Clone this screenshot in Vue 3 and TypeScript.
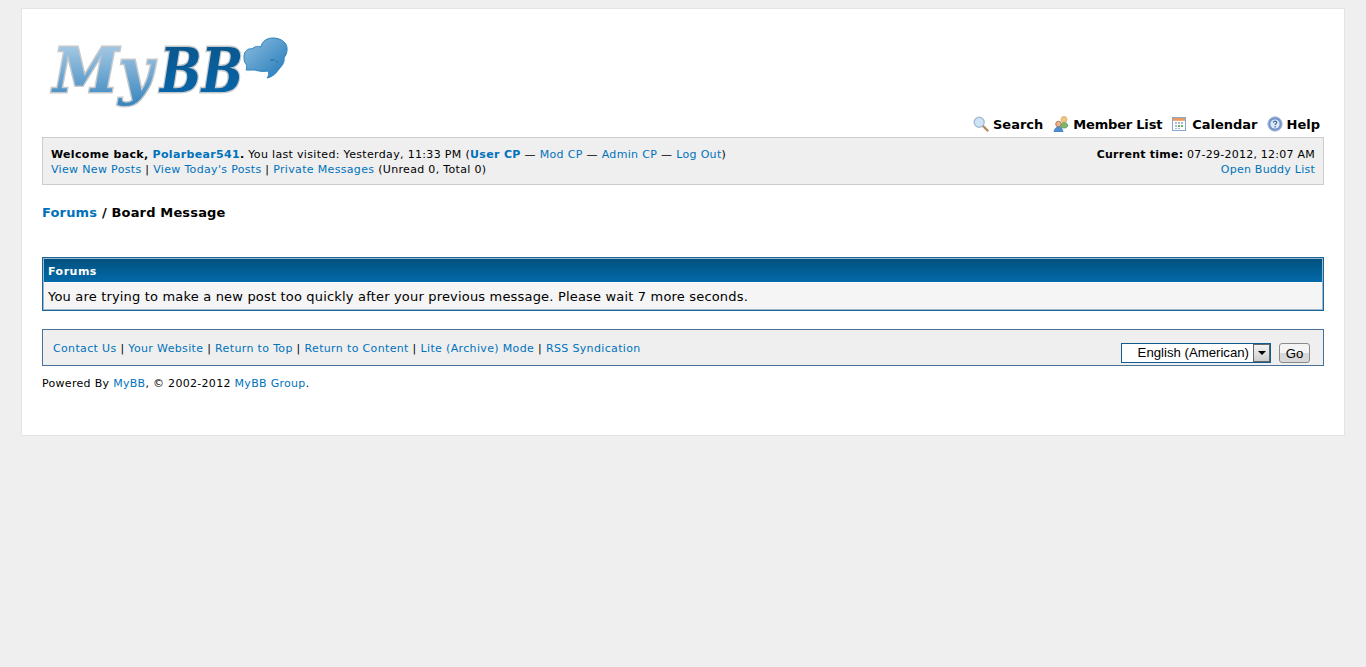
<script setup lang="ts">
const navItems = [
  { label: 'Search', icon: 'search' },
  { label: 'Member List', icon: 'members' },
  { label: 'Calendar', icon: 'calendar' },
  { label: 'Help', icon: 'help' },
]
const footerLinks = ['Contact Us', 'Your Website', 'Return to Top', 'Return to Content', 'Lite (Archive) Mode', 'RSS Syndication']
</script>

<template>
  <div class="page">
    <div class="wrapper">
      <header class="header">
        <svg class="logo" width="240" height="84" viewBox="0 -8 240 84" aria-label="MyBB">
          <defs>
            <linearGradient id="lightText" x1="0" y1="0" x2="0" y2="1">
              <stop offset="0" stop-color="#b9d5ea" />
              <stop offset="1" stop-color="#3584bd" />
            </linearGradient>
            <linearGradient id="darkText" x1="0" y1="0" x2="0" y2="1">
              <stop offset="0" stop-color="#0a5488" />
              <stop offset="1" stop-color="#0769b0" />
            </linearGradient>
            <linearGradient id="bubble" x1="0" y1="0" x2="1" y2="1">
              <stop offset="0" stop-color="#8fbee0" />
              <stop offset="1" stop-color="#1f78b8" />
            </linearGradient>
          </defs>
          <text x="4" y="55" class="logo-text" textLength="100" lengthAdjust="spacingAndGlyphs" fill="url(#lightText)" stroke="#c6c9cc" stroke-width="3" paint-order="stroke">My</text>
          <text x="111" y="55" class="logo-text" textLength="83" lengthAdjust="spacingAndGlyphs" fill="url(#darkText)" stroke="#c6c9cc" stroke-width="3" paint-order="stroke">BB</text>
          <path d="M195 20C195 14 199 11 203 12C206 9 209 9 212 10C213 4 218 1 224 1C232 1 239 6 238 13C238 17 236 19 235 21C236 25 233 29 230 32C228 35 224 40 218 41C220 39 220 36 219 34C214 35 209 34 206 33C203 33 200 33 197 33C198 31 198 29 197 27C195 25 195 22 195 20Z" fill="url(#bubble)" stroke="#2b83c0" stroke-width="1" />
          <path d="M221 23h5M227 25h2" stroke="#1d6ba6" stroke-width="1" />
        </svg>
        <nav class="top-nav">
          <a v-for="item in navItems" :key="item.label" class="top-link" :class="{ tight: item.icon === 'members', last: item.icon === 'help' }">
            <svg v-if="item.icon === 'search'" class="nav-icon" viewBox="0 0 16 16">
              <circle cx="6.2" cy="6.2" r="5" fill="#cfe3f6" stroke="#a6bdd4" stroke-width="1.4" />
              <path d="M10.5 10.5l4 4" stroke="#b08a62" stroke-width="2.4" stroke-linecap="round" />
            </svg>
            <svg v-else-if="item.icon === 'members'" class="nav-icon" viewBox="0 0 16 16">
              <circle cx="11" cy="3.5" r="3" fill="#f3c67e" stroke="#c99a4e" stroke-width=".6" />
              <path d="M7.5 11c0-3 1.5-4.5 3.5-4.5s4 1 4 3.5l-2 2H9z" fill="#7fb56a" stroke="#5e934c" stroke-width=".6" />
              <circle cx="5.5" cy="8" r="2.8" fill="#e9b489" stroke="#8e5f3e" stroke-width=".7" />
              <path d="M1 16c0-3 2-5 4.5-5S10 13 10 16z" fill="#4f8fd3" stroke="#3a6ea8" stroke-width=".6" />
            </svg>
            <svg v-else-if="item.icon === 'calendar'" class="nav-icon cal" viewBox="0 0 14 14">
              <rect x=".5" y=".5" width="13" height="13" fill="#fff" stroke="#86a6cc" />
              <rect x="1" y="1" width="12" height="2.8" fill="#ee9a5a" />
              <path d="M3 5h2v2H3zM6 5h2v2H6zM9 5h2v2H9zM3 8h2v2H3zM3 11h2v1H3zM6 11h2v1H6z" fill="#a9bccf" />
              <path d="M6 8h2v2H6zM9 8h2v2H9z" fill="#6fb36f" />
            </svg>
            <svg v-else class="nav-icon" viewBox="0 0 16 16">
              <circle cx="8" cy="8" r="7.2" fill="#7397cc" stroke="#aebfd6" stroke-width="1" />
              <circle cx="8" cy="8" r="4.6" fill="#dfe8f5" />
              <path d="M6.4 6.6c.1-1 .8-1.5 1.7-1.5s1.6.6 1.6 1.4c0 1.2-1.6 1.2-1.6 2.5" fill="none" stroke="#3f68a8" stroke-width="1.2" />
              <circle cx="8.1" cy="10.7" r=".8" fill="#3f68a8" />
            </svg>
            <span>{{ item.label }}</span>
          </a>
        </nav>
      </header>

      <section class="panel">
        <div>
          <div>
            <strong>Welcome back, <a class="link">Polarbear541</a>.</strong> You last visited: Yesterday, 11:33 PM
            (<a class="link"><strong>User CP</strong></a> — <a class="link">Mod CP</a> — <a class="link">Admin CP</a> — <a class="link">Log Out</a>)
          </div>
          <div>
            <a class="link">View New Posts</a> | <a class="link">View Today's Posts</a> | <a class="link">Private Messages</a> (Unread 0, Total 0)
          </div>
        </div>
        <div class="panel-right">
          <div><strong>Current time:</strong> 07-29-2012, 12:07 AM</div>
          <div><a class="link">Open Buddy List</a></div>
        </div>
      </section>

      <div class="breadcrumb"><a class="link">Forums</a> / Board Message</div>

      <section class="tborder">
        <div class="thead">Forums</div>
        <div class="trow">You are trying to make a new post too quickly after your previous message. Please wait 7 more seconds.</div>
      </section>

      <footer class="bottom">
        <div class="bottom-links">
          <template v-for="(l, i) in footerLinks" :key="l">
            <span v-if="i > 0" class="sep"> | </span><a class="link">{{ l }}</a>
          </template>
        </div>
        <div class="lang">
          <div class="select">
            <span class="select-text">English (American)</span>
            <span class="select-btn"><i class="caret"></i></span>
          </div>
          <button class="go" type="button">Go</button>
        </div>
      </footer>

      <div class="powered">Powered By <a class="link">MyBB</a>, © 2002-2012 <a class="link">MyBB Group</a>.</div>
    </div>
  </div>
</template>

<style>
html, body { margin: 0; background: #efefef; }
</style>

<style scoped>
.page {
  min-height: 667px;
  box-sizing: border-box;
  background: #efefef;
  padding: 8px 21px 0;
  font-family: Verdana, "DejaVu Sans", sans-serif;
  font-size: 11px;
  line-height: 15px;
  letter-spacing: 0.33px;
  color: #000;
}
.wrapper {
  box-sizing: border-box;
  height: 428px;
  background: #fff;
  border: 1px solid #e4e4e4;
  padding: 0 20px;
}
.header {
  height: 128px;
  display: flex;
  flex-direction: column;
  justify-content: space-between;
}
.logo { margin: 20px 0 0 7px; display: block; flex: none; }
.logo-text {
  font-family: "DejaVu Serif", serif;
  font-weight: bold;
  font-style: italic;
  font-size: 62px;
  letter-spacing: 0;
}
.top-nav {
  display: flex;
  justify-content: flex-end;
  gap: 10px;
  padding-right: 4px;
  font-size: 13px;
  font-weight: bold;
  line-height: 16px;
  letter-spacing: 0;
  padding-bottom: 4px;
}
.top-link { display: flex; align-items: center; gap: 4px; }
.tight { letter-spacing: -0.2px; }
.last { margin-left: -1px; }
.nav-icon { width: 16px; height: 16px; display: block; margin-top: -3px; }
.cal { width: 14px; height: 14px; margin-top: -3px; margin-right: 2px; }
.panel {
  box-sizing: border-box;
  height: 48px;
  background: #efefef;
  border: 1px solid #ccc;
  padding: 9px 8px 0;
  display: flex;
  justify-content: space-between;
}
.panel-right { text-align: right; letter-spacing: 0.24px; }
.link { color: #0072bc; }
.breadcrumb {
  margin-top: 20px;
  font-size: 13px;
  font-weight: bold;
  line-height: 16px;
  letter-spacing: 0.16px;
}
.tborder {
  box-sizing: border-box;
  height: 54px;
  margin-top: 36px;
  border: 1px solid #1a6497;
  background: #9bb8cf;
  padding: 1px;
  display: flex;
  flex-direction: column;
}
.thead {
  height: 23px;
  flex: none;
  box-sizing: border-box;
  padding: 5px 4px 0;
  background: linear-gradient(#02517f, #026aa9);
  color: #fff;
  font-weight: bold;
  line-height: 15px;
  letter-spacing: 0.5px;
}
.trow {
  flex: 1;
  background: #f5f5f5;
  border-top: 1px solid #fff;
  font-size: 13px;
  line-height: 16px;
  letter-spacing: 0.18px;
  padding: 6px 4px 0;
}
.bottom {
  box-sizing: border-box;
  height: 37px;
  margin-top: 18px;
  border: 1px solid #4a7196;
  background: #efefef;
  display: flex;
  justify-content: space-between;
  padding: 11px 13px 0 10px;
  letter-spacing: 0.35px;
}
.sep { white-space: pre; }
.lang {
  display: flex;
  align-items: flex-start;
  gap: 8px;
  margin-top: 2px;
  font-family: Arial, "Liberation Sans", sans-serif;
  font-size: 13.2px;
  letter-spacing: 0;
}
.select {
  box-sizing: border-box;
  width: 150px;
  height: 20px;
  border: 1px solid #0f5c8e;
  background: #fff;
  display: flex;
  justify-content: flex-end;
  align-items: center;
}
.select-text { line-height: 18px; padding-right: 4px; }
.select-btn {
  box-sizing: border-box;
  width: 17px;
  height: 18px;
  border: 1px solid #666;
  background: linear-gradient(#f2f2f2, #cfcfcf);
  display: flex;
  align-items: center;
  justify-content: center;
}
.caret {
  display: block;
  width: 0;
  height: 0;
  border-left: 4px solid transparent;
  border-right: 4px solid transparent;
  border-top: 4px solid #000;
}
.go {
  box-sizing: border-box;
  width: 31px;
  height: 20px;
  padding: 0;
  border: 1px solid #8a8a8a;
  border-radius: 3px;
  background: linear-gradient(#f4f4f4 50%, #d8d8d8 50%);
  font: inherit;
  color: #000;
}
.powered { margin-top: 10px; letter-spacing: 0.3px; }
</style>
